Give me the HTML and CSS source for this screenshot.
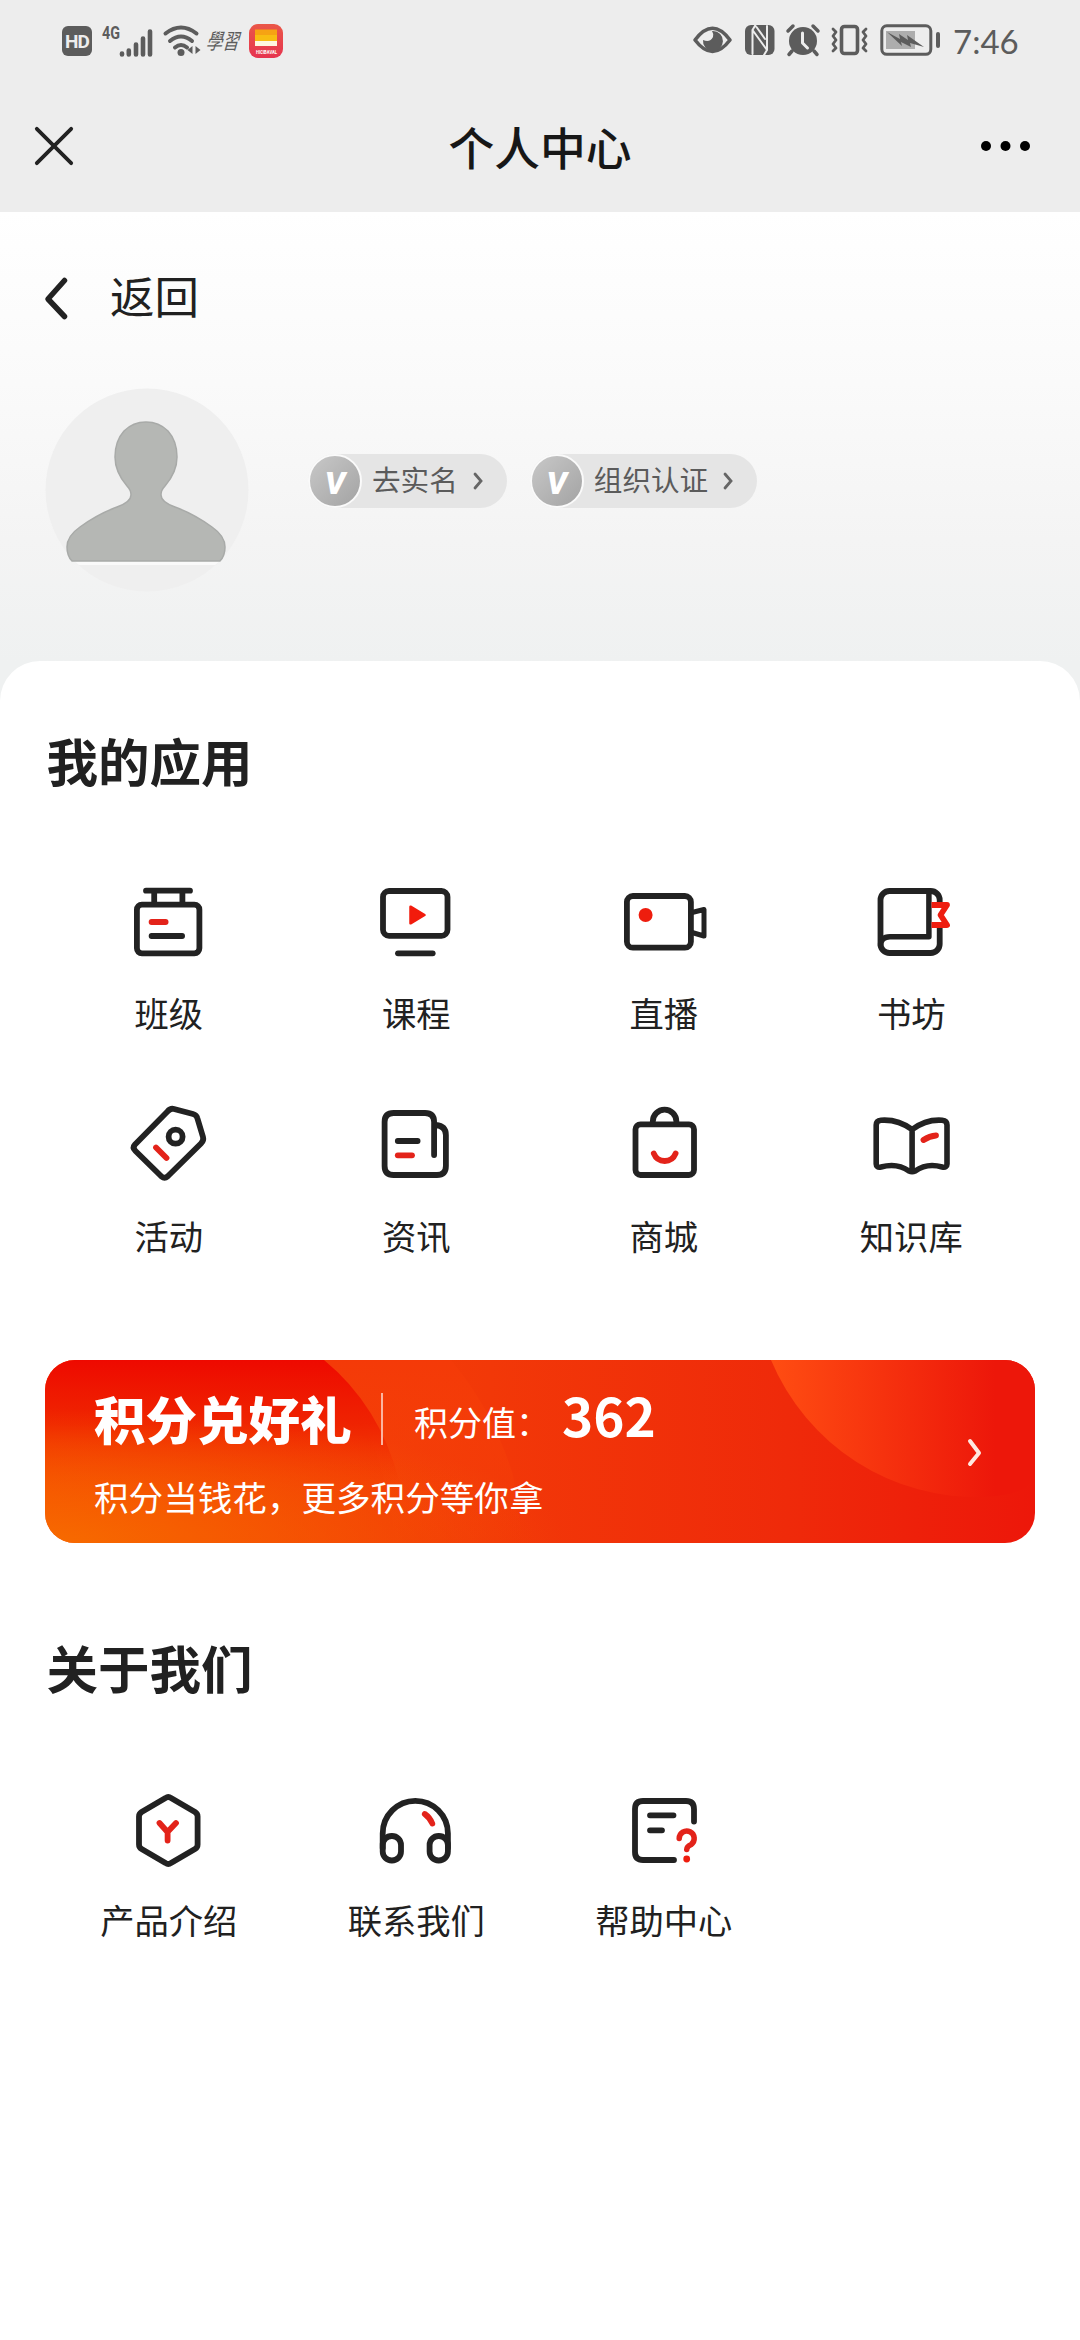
FILE: index.html
```html
<!DOCTYPE html>
<html lang="zh-CN">
<head>
<meta charset="utf-8">
<title>个人中心</title>
<link rel="stylesheet" href="styles.css">
</head>
<body>
<div class="top">
  <div class="status">
    <div class="status-left">
      <span class="hd">HD</span>
      <svg class="signal" width="52" height="34" viewBox="0 0 52 34"><text x="0" y="14.500" class="net" textLength="18" lengthAdjust="spacingAndGlyphs">4G</text><path d="M20 30.500v-1M26.800 30.500v-4M34 30.500v-10M41 30.500v-16M48 30.500v-23" stroke-width="4.600"/></svg>
      <svg class="wifi" width="38" height="34" viewBox="0 0 38 34"><path d="M2.500 9.500q15.500-12 31 0M7 17q11-9 22 0M12 23.500q6-5 12 0" stroke-width="4"/><circle cx="18" cy="28.500" r="3.500"/><path class="solid" d="M29.500 22v8l-5-4zM32.500 22v8l5-4z"/></svg>
      <span class="hand">學習</span>
      <svg class="app" width="34" height="34" viewBox="0 0 34 34"><defs><linearGradient id="appbg" x1="0" y1="0" x2="0" y2="1"><stop offset="0" stop-color="#ea5748"/><stop offset="1" stop-color="#e6344f"/></linearGradient></defs><rect width="34" height="34" rx="9" fill="url(#appbg)"/><path fill="#f6a313" d="M6 5.500h22v6H6z"/><path fill="#f8bd12" d="M6 11h22v6H6z"/><path fill="#fff6df" d="M6 17h22v5H6z"/><text x="7" y="29.500" textLength="21" lengthAdjust="spacingAndGlyphs" class="app-name">HICIBAVAL</text></svg>
    </div>
    <div class="status-right">
      <svg width="40" height="34" viewBox="0 0 40 34"><path d="M2 17Q19.500-6.500 37 17Q19.500 40 2 17z" stroke-width="3.600"/><path class="solid" d="M20 8a10 10 0 1 1-10 9q7 3 10-3 1-3-1-6z"/></svg>
      <svg width="30" height="34" viewBox="0 0 30 34"><rect x="0" y="2" width="29.500" height="30" rx="6"/><path class="cut" d="M7.500 31V7L22 27M7.500 7l3-5M22 3v24l-3 5M11.500 4L20 16" stroke-width="2"/></svg>
      <svg width="34" height="34" viewBox="0 0 34 34"><circle cx="17" cy="18" r="14"/><path d="M2 8l5-5M27 3l5 5M6 28l-3 3.500M28 28l3 3.500" stroke-width="3.500"/><path class="cut" d="M16.500 10v10l5 5" stroke-width="3"/></svg>
      <svg width="38" height="34" viewBox="0 0 38 34"><rect class="none" x="10.500" y="3.500" width="16" height="27" rx="3" stroke-width="3.600"/><path d="M2 6l3 3-3 4 3 4-3 4 3 4-3 3M35 6l-3 3 3 4-3 4 3 4-3 4 3 3" stroke-width="2.800"/></svg>
      <svg width="62" height="34" viewBox="0 0 62 34"><rect class="none" x="1.800" y="2.800" width="49" height="28.500" rx="5" stroke-width="3"/><path fill="#adadad" d="M6 8h29v18H6z"/><path class="solid" d="M7 9l13 7-1-5 9 6-1-5 17 12-14-4 1 4-10-5 1 4z"/><rect x="56" y="9" width="4" height="16" rx="2"/></svg>
      <span class="time">7:46</span>
    </div>
  </div>
  <div class="nav">
    <svg class="line" width="42" height="42" viewBox="0 0 44 44"><path d="M4 4l36 36M40 4L4 40" stroke-width="4"/></svg>
    <h1>个人中心</h1>
    <svg width="50" height="12" viewBox="0 0 50 12"><circle cx="6" cy="6" r="5"/><circle cx="25.500" cy="6" r="5"/><circle cx="45" cy="6" r="5"/></svg>
  </div>
</div>

<div class="profile">
  <div class="back">
    <svg class="line" width="26" height="44" viewBox="0 0 26 44"><path d="M20.500 4.500L4 23l16.500 17.500" stroke-width="5.500"/></svg>
    <span>返回</span>
  </div>
  <div class="user">
    <svg class="avatar" width="204" height="206" viewBox="0 0 204 206"><defs><clipPath id="disc"><circle cx="102" cy="103" r="101.500"/></clipPath></defs><circle cx="102" cy="103" r="101.500" fill="#efefef"/><g clip-path="url(#disc)"><path fill="#fafafa" d="M24 174h155v4H24z"/></g><path fill="#b5b7b4" stroke="#a8aaa8" stroke-width="1.500" d="M27 174q-5-5-5-14 0-11 13-20 18-13 37-20 14-5 14-12 0-5-4-9-12-14-12-29 0-16 9-26 9-9 22-9t22 9q9 10 9 26 0 15-12 29-4 4-4 9 0 7 14 12 19 7 37 20 13 9 13 20 0 9-5 14z"/></svg>
    <div class="badges">
      <div class="badge"><b>V</b><span>去实名</span><svg width="14" height="20" viewBox="0 0 14 20"><path d="M4 3l6 7-6 7" stroke-width="2.800"/></svg></div>
      <div class="badge"><b>V</b><span>组织认证</span><svg width="14" height="20" viewBox="0 0 14 20"><path d="M4 3l6 7-6 7" stroke-width="2.800"/></svg></div>
    </div>
  </div>
</div>

<main class="panel">
  <h2>我的应用</h2>
  <div class="grid">
    <div class="item"><svg class="icon" viewBox="0 0 90 90"><path d="M22 13.700h44M30.200 14v13M58.400 14v13M27.600 59h30.500"/><rect x="12.900" y="27.700" width="62.500" height="48.600" rx="5"/><path class="red" d="M27.600 45h14"/></svg><span>班级</span></div>
    <div class="item"><svg class="icon" viewBox="0 0 90 90"><rect x="12" y="14" width="64.500" height="44.800" rx="6"/><path d="M27 76.300h34.700"/><path class="redfill" d="M39.500 29.700l14 8.300-14 8.300z"/></svg><span>课程</span></div>
    <div class="item"><svg class="icon" viewBox="0 0 90 90"><rect x="7.900" y="19" width="64" height="51.700" rx="6"/><path d="M73 35.500l12-3v26.500l-12-3.500" stroke-width="5"/><circle class="dot" cx="26.600" cy="38" r="7"/></svg><span>直播</span></div>
    <div class="item"><svg class="icon" viewBox="0 0 90 90"><rect x="14.500" y="14" width="59.200" height="62" rx="9"/><path d="M62.900 14v45.700H24q-9.500 0-9.500 9" stroke-width="5.500"/><path class="gap" d="M66 31h13v15H66z"/><path class="redcut" d="M65.500 28H81L74.500 38 81 48H65.500"/></svg><span>书坊</span></div>
    <div class="item"><svg class="icon" viewBox="0 0 90 90"><path d="M43.500 11.500Q46.500 8 50 9L69 14Q72.500 15 73.300 18L79 37Q80 40.500 77 43.500L43.500 76.500Q40.600 79 37.500 76.500L11.500 51Q8 47.700 11 44.500z"/><circle class="ring" cx="51.600" cy="36.700" r="7"/><path class="red" d="M32 47.500l10.500 10.500"/></svg><span>活动</span></div>
    <div class="item"><svg class="icon" viewBox="0 0 90 90"><path d="M63.100 55V22q0-9-9-9H22.600q-9 0-9 9v44q0 9 9 9h43.300q9 0 9-9V35q0-9-10-10M26.800 41h19.800"/><path class="red" d="M26.800 55.300H41"/></svg><span>资讯</span></div>
    <div class="item"><svg class="icon" viewBox="0 0 90 90"><rect x="16.500" y="24.300" width="58.500" height="50.700" rx="5"/><path d="M33.800 23.500v-2a11.800 11.800 0 0 1 23.600 0v2"/><path class="red" d="M34.800 53.500q3 7.500 10.900 7.500t10.900-7.500"/></svg><span>商城</span></div>
    <div class="item"><svg class="icon" viewBox="0 0 90 90"><path d="M46.100 29.500Q32 19 15 20.200Q10.200 20.700 10.200 25V64Q10.200 68 15 67Q31 62.500 43 71Q46.100 72.500 49.200 71Q61 62.500 76.200 67Q81 68 81 64V25Q81 20.700 76.200 20.200Q60 19 46.100 29.500V71" stroke-width="5.600"/><path class="red" d="M57.500 40q6-4.200 12.500-4.500"/></svg><span>知识库</span></div>
  </div>

  <div class="banner">
    <svg class="banner-art" width="990" height="183" viewBox="0 0 990 183" preserveAspectRatio="none">
      <defs>
        <linearGradient id="base" x1="0" y1="0" x2="1" y2="0"><stop offset="0" stop-color="#f54a00"/><stop offset=".45" stop-color="#f23808"/><stop offset=".75" stop-color="#ef2a0a"/><stop offset="1" stop-color="#ed170a"/></linearGradient>
        <radialGradient id="glow" gradientUnits="userSpaceOnUse" cx="0" cy="183" r="1" gradientTransform="translate(0 183) scale(520 135) translate(0 -183)"><stop offset="0" stop-color="#f76b00"/><stop offset="1" stop-color="#f65c00" stop-opacity="0"/></radialGradient>
        <linearGradient id="left" x1="0" y1="0" x2="0" y2="1"><stop offset="0" stop-color="#ee0900"/><stop offset=".35" stop-color="#ee1c00" stop-opacity=".8"/><stop offset=".75" stop-color="#f43e00" stop-opacity="0"/></linearGradient>
        <linearGradient id="mid" x1="0" y1="0" x2="0" y2="1"><stop offset="0" stop-color="#f43a08"/><stop offset="1" stop-color="#f64408" stop-opacity="0"/></linearGradient>
        <linearGradient id="ball" x1="0" y1="0" x2="1" y2="0"><stop offset="0" stop-color="#ff4d12"/><stop offset=".85" stop-color="#ed170a"/></linearGradient>
      </defs>
      <path fill="url(#base)" d="M0 0h990v183H0z"/>
      <path fill="url(#mid)" d="M279 0h127q42 50 62 115l10 68H350q-10-110-71-183z"/>
      <path fill="url(#left)" d="M0 0h279q55 45 75 120l10 63H0z"/>
      <path fill="url(#glow)" d="M0 0h990v183H0z"/>
      <path fill="url(#ball)" d="M726 0A223 223 0 0 0 940 137Q990 135 990 110V0z"/>
    </svg>
    <div class="banner-body">
      <div class="banner-top">
        <strong>积分兑好礼</strong>
        <i class="divider"></i>
        <span class="label">积分值：</span>
        <span class="points">362</span>
      </div>
      <div class="banner-sub">积分当钱花，更多积分等你拿</div>
    </div>
    <svg class="go" width="20" height="32" viewBox="0 0 20 32"><path d="M5 5l9 12-9 11" stroke-width="4"/></svg>
  </div>

  <h2 class="about">关于我们</h2>
  <div class="grid">
    <div class="item"><svg class="icon" viewBox="0 0 90 90"><path d="M41.500 14Q44.300 12 47 14L71 28Q73.600 29.700 73.600 32.500V60.500Q73.600 63.500 71 65L47 79Q44.300 81 41.500 79L17.600 65Q15 63.500 15 60.500V32.500Q15 29.700 17.600 28z"/><path class="red" d="M35.500 39l8 9 8.500-9M43.600 48v8.500"/></svg><span>产品介绍</span></div>
    <div class="item"><svg class="icon" viewBox="0 0 90 90"><path d="M11.700 64V49.400a32.600 32.600 0 0 1 65.200 0V64" /><rect x="11.700" y="52" width="18.300" height="24.500" rx="9"/><rect x="58.600" y="52" width="18.300" height="24.500" rx="9"/><path class="red" d="M53.800 30q5 3.500 7.500 9.500"/></svg><span>联系我们</span></div>
    <div class="item"><svg class="icon" viewBox="0 0 90 90"><path d="M75 37.500V25q0-8-8-8H24q-8 0-8 8v43q0 8 8 8h31M31 31.300h23.500M31 46.300h12"/><path class="red" d="M60.200 54.500a7.500 7.500 0 1 1 12 6q-4.500 2-4.500 5" stroke-width="5.500"/><circle class="dot" cx="67.700" cy="75" r="3.400"/></svg><span>帮助中心</span></div>
  </div>
</main>
</body>
</html>
```
FILE: styles.css
```css
* { box-sizing: border-box; }
body {
  margin: 0;
  width: 1080px;
  height: 2340px;
  overflow: hidden;
  background: #fff;
  color: #212121;
  font-family: "Noto Sans CJK SC", "Noto Sans", sans-serif;
}
svg { display: block; flex: none; overflow: visible; }
h1, h2 { margin: 0; }

.top { height: 212px; background: #ededed; }
.status {
  height: 80px;
  padding: 0 60px 0 62px;
  display: flex;
  justify-content: space-between;
  color: #5c5c5c;
}
.status svg { fill: #5c5c5c; stroke-linecap: round; stroke-linejoin: round; }
.status path { fill: none; stroke: #5c5c5c; }
.status .solid { fill: #5c5c5c; stroke: none; }
.status .cut { stroke: #ededed; }
.status .none { fill: none; stroke: #5c5c5c; }
.status path[fill] { stroke: none; }
.status path[fill="#f6a313"] { fill: #f6a313; }
.status path[fill="#f8bd12"] { fill: #f8bd12; }
.status path[fill="#fff6df"] { fill: #fff6df; }
.status path[fill="#adadad"] { fill: #adadad; }
.status-left, .status-right { display: flex; align-items: flex-start; padding-top: 24px; }
.status-right { gap: 11px; padding-top: 23px; }
.hd {
  width: 30px;
  height: 30px;
  margin-top: 2px;
  border-radius: 6px;
  background: #5c5c5c;
  color: #ededed;
  font: bold 19px/31px Roboto, sans-serif;
  text-align: center;
  letter-spacing: -1px;
}
.signal { margin-left: 10px; }
.net { font: bold 18px Roboto, sans-serif; }
.wifi { margin-left: 9px; }
.hand {
  margin: 3px 0 0 7px;
  font-size: 16.500px;
  line-height: 26px;
  transform: skewX(-16deg) scaleY(1.3);
}
.app { margin-left: 8px; }
.app-name { font: bold 5px Roboto, sans-serif; fill: #fff; }
.time {
  width: 67px;
  font: 400 33px/36px Lato, sans-serif;
}
.status-right svg:first-child { margin-right: 1px; }

.nav {
  height: 132px;
  padding: 0 50px 0 33px;
  display: grid;
  grid-template-columns: 67px 1fr 50px;
  align-items: center;
}
.nav h1 { margin-top: -1px; font-size: 45.800px; font-weight: 500; line-height: 60px; text-align: center; color: #171717; }
.line { fill: none; stroke: #222; stroke-linecap: round; stroke-linejoin: round; }

.profile {
  height: 489px;
  padding: 55px 45px 0;
  background: linear-gradient(#fff 0, #fafafa 35%, #f4f4f4 67%, #eff1f1 92%);
}
.back { height: 62px; display: flex; align-items: center; gap: 40px; font-size: 44.500px; line-height: 62px; }
.back svg { margin-left: -1px; }
.back span { margin-top: -6px; }
.user { margin-top: 58px; display: flex; }
.badges { display: flex; gap: 23px; margin: 67px 0 0 59px; height: 54px; }
.badge {
  display: flex;
  align-items: center;
  padding-right: 22px;
  border-radius: 27px;
  background: #e5e5e5;
  color: #5b5b5b;
  font-size: 28.600px;
}
.badge b {
  width: 54px;
  height: 54px;
  margin-right: 10px;
  border: 2px solid #fafafa;
  border-radius: 50%;
  background: linear-gradient(135deg, #c8c8c8, #a3a3a3);
  color: #fff;
  font: italic 900 32px/54px Roboto, sans-serif;
  text-align: center;
}
.badge span { margin-top: -5px; }
.badge svg { margin-left: 13px; fill: none; stroke: #666; stroke-linecap: round; }

.panel {
  height: 1679px;
  margin-top: -40px;
  padding: 64px 45px 0;
  border-radius: 40px 40px 0 0;
  background: #fff;
}
h2 { padding-left: 1.500px; font-size: 51.500px; line-height: 70px; font-weight: 700; }
.grid { display: grid; grid-template-columns: repeat(4, 1fr); padding-top: 82px; }
.item { height: 223px; display: flex; flex-direction: column; align-items: center; }
.item span { margin-top: 19px; font-size: 34.300px; line-height: 52px; }
.icon { width: 90px; height: 90px; fill: none; stroke: #222; stroke-width: 5.800px; stroke-linecap: round; stroke-linejoin: round; }
.red { stroke: #e3231a; }
.redcut { stroke: #ee1d10; stroke-width: 5.800px; stroke-linecap: butt; }
.redfill { fill: #f21b0c; stroke: #f21b0c; stroke-width: 2.500px; }
.dot { fill: #ee1d0e; stroke: none; }
.gap { fill: #fff; stroke: none; }

.banner {
  height: 183px;
  margin-top: 37px;
  border-radius: 30px;
  display: grid;
  overflow: hidden;
  grid-template-columns: 1fr 70px;
  color: #fff;
}
.banner-art { grid-area: 1 / 1 / 2 / 3; }
.banner-body { grid-area: 1 / 1; padding: 30px 0 0 49px; z-index: 1; }
.banner-top { height: 60px; display: flex; align-items: center; white-space: nowrap; }
.banner strong { width: 257px; margin-top: -5px; font-size: 51.500px; line-height: 60px; font-weight: 900; }
.divider { width: 2px; height: 52px; margin: -2px 31px 0 30px; background: #fbb5a0; }
.label { width: 148px; font-size: 34px; padding-top: 2px; }
.points { margin-top: -12px; font-size: 53px; line-height: 60px; font-weight: 700; }
.banner-sub { margin-top: 20px; font-size: 34.600px; line-height: 52px; }
.go { grid-area: 1 / 2; align-self: center; z-index: 1; fill: none; stroke: #ffe8e0; stroke-linecap: round; stroke-linejoin: round; }
.about { margin-top: 89px; }
```
